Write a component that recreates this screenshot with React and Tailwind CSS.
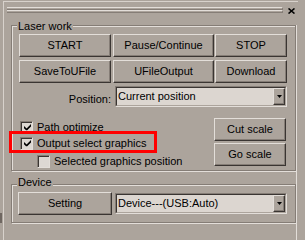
import React from "react";

const btn =
  "flex items-center justify-center h-[23px] bg-[#aca49c] border border-t-[#e3ded9] border-l-[#e3ded9] border-b-[#3a3532] border-r-[#3a3532] shadow-[inset_-1px_-1px_0_#857d76] leading-none";

function Button({ label, w }) {
  return <div className={`${btn} ${w}`}>{label}</div>;
}

function Select({ value, w }) {
  return (
    <div className={`flex h-[21px] ${w} bg-[#dcd6d0] border border-t-[#857d76] border-l-[#857d76] border-b-[#e3ded9] border-r-[#e3ded9]`}>
      <div className="flex flex-1 border border-t-[#3a3532] border-l-[#3a3532] border-b-[#aca49c] border-r-[#aca49c]">
        <div className="flex-1 flex items-center pl-[1px] leading-none">{value}</div>
        <div className="w-[12px] flex items-center justify-center bg-[#aca49c] border border-t-[#e3ded9] border-l-[#e3ded9] border-b-[#3a3532] border-r-[#3a3532] shadow-[inset_-1px_-1px_0_#857d76]">
          <svg width="5" height="3" viewBox="0 0 5 3">
            <path d="M0 0h5L2.5 3z" fill="#000" />
          </svg>
        </div>
      </div>
    </div>
  );
}

function Check({ label, checked }) {
  return (
    <div className="flex items-center h-[16px]">
      <div className="w-[13px] h-[13px] flex items-center justify-center bg-[#ddd8d3] border border-t-[#857d76] border-l-[#857d76] border-b-[#e3ded9] border-r-[#e3ded9] shadow-[inset_1px_1px_0_#3a3532]">
        {checked && (
          <svg width="7" height="7" viewBox="0 0 7 7" className="ml-[1px] mt-[1px]">
            <path d="M0 2v2.2l2 2h1.2l3.8-3.8V0L2.6 4.4z" fill="#000" />
          </svg>
        )}
      </div>
      <span className="ml-[4px] leading-[13px]">{label}</span>
    </div>
  );
}

const group =
  "relative ml-[7px] w-[285px] border border-[#857d76] shadow-[inset_1px_1px_0_#e3ded9,1px_1px_0_#e3ded9]";

export default function App() {
  return (
    <div className="flex w-[305px] h-[240px] bg-[#aca49c] overflow-hidden font-['Liberation_Sans',Arial,sans-serif] text-[11px] text-black">
      <div className="w-[3px] shrink-0">
        <div className="mt-[213px] h-[10px] w-[2px] bg-[#6f6761]" />
      </div>
      <div className="flex flex-col mt-[1px] w-[295px] h-[239px] border-l border-t border-[#d8d2cc]">
        <div className="flex items-start pt-[5px] pl-[3px]">
          <div className="w-[276px]">
            <div className="h-[3px] border-t border-b border-t-[#e3ded9] border-b-[#857d76] border-r border-r-[#857d76]" />
            <div className="h-[3px] border-t border-b border-t-[#e3ded9] border-b-[#857d76] border-r border-r-[#857d76]" />
          </div>
          <svg width="7" height="6" viewBox="0 0 7 6" className="ml-[5px] mt-[1px]">
            <path d="M0.5 0.5l6 5M6.5 0.5l-6 5" stroke="#000" strokeWidth="1.6" />
          </svg>
        </div>

        <div className="flex-1 mt-[11px] w-[293px] border-r border-[#e3ded9]">
          <div className={`${group} h-[146px]`}>
            <span className="absolute left-[5px] top-[-6px] px-[1px] bg-[#aca49c] leading-[13px]">Laser work</span>
            <div className="pl-[7px] pt-[8px]">
              <div className="flex">
                <Button label="START" w="w-[92px]" />
                <div className="ml-[2px]"><Button label="Pause/Continue" w="w-[101px]" /></div>
                <div className="ml-[1px]"><Button label="STOP" w="w-[72px]" /></div>
              </div>
              <div className="flex mt-[3px]">
                <Button label="SaveToUFile" w="w-[92px]" />
                <div className="ml-[2px]"><Button label="UFileOutput" w="w-[101px]" /></div>
                <div className="ml-[1px]"><Button label="Download" w="w-[72px]" /></div>
              </div>
              <div className="flex items-start mt-[3px]">
                <span className="w-[92px] text-right mt-[7px] leading-[13px]">Position:</span>
                <div className="ml-[4px]"><Select value="Current position" w="w-[172px]" /></div>
              </div>
            </div>
            <div className="flex mt-[11px] pl-[8px]">
              <div className="w-[194px] pt-[1px]">
                <Check label="Path optimize" checked />
                <Check label="Output select graphics" checked />
                <div className="pl-[17px] mt-[2px]">
                  <Check label="Selected graphics position" />
                </div>
              </div>
              <div className="w-[72px]">
                <Button label="Cut scale" w="w-[72px]" />
                <div className="mt-[2px]"><Button label="Go scale" w="w-[72px]" /></div>
              </div>
            </div>
            <div className="absolute left-[-3px] top-[105px] w-[148px] h-[22px] border-[3px] border-[#ff0000]" />
          </div>

          <div className={`${group} mt-[13px] h-[39px]`}>
            <span className="absolute left-[5px] top-[-9px] px-[1px] bg-[#aca49c] leading-[13px]">Device</span>
            <div className="flex items-start pl-[6px] pt-[7px]">
              <Button label="Setting" w="w-[94px]" />
              <div className="ml-[3px] mt-[1px]"><Select value="Device---(USB:Auto)" w="w-[172px]" /></div>
            </div>
          </div>
        </div>
      </div>
    </div>
  );
}
